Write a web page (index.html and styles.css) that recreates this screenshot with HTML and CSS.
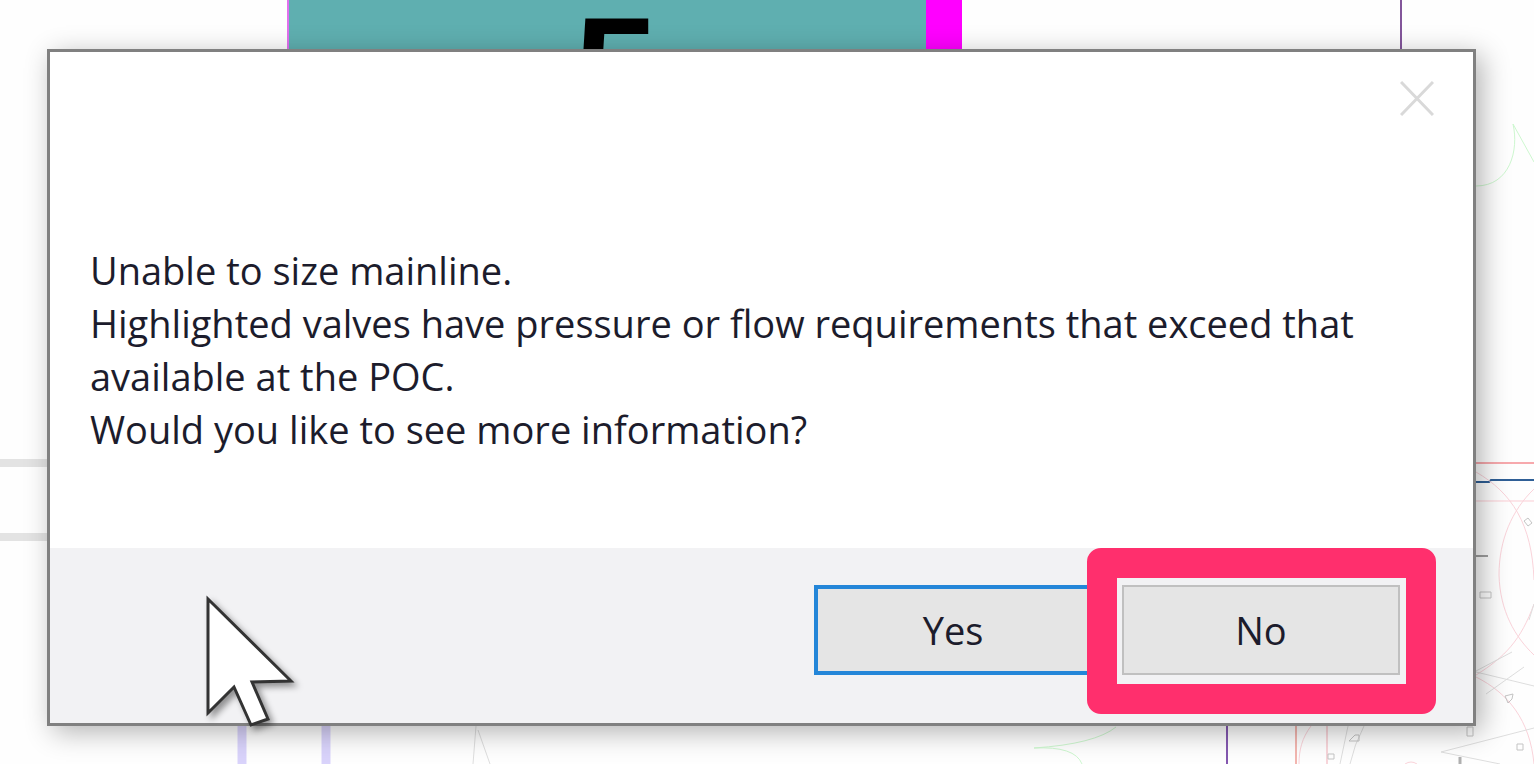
FILE: index.html
```html
<!DOCTYPE html>
<html lang="en">
<head>
    <meta charset="UTF-8">
    <meta name="viewport" content="width=device-width, initial-scale=1.0">
    <title>Size Mainline</title>
    <link rel="stylesheet" href="styles.css">
</head>
<body>
    <svg class="drawing" viewBox="0 0 1534 764" preserveAspectRatio="xMinYMin slice" aria-hidden="true">
        <!-- station label -->
        <rect x="288" y="0" width="640" height="200" fill="#5fafb0"/>
        <rect x="287" y="0" width="2" height="200" fill="#e070ee"/>
        <rect x="926" y="0" width="36" height="200" fill="#ff00ff"/>
        <text class="station" x="574" y="124">5</text>
        <path d="M1401 0V60" stroke="#83569b" stroke-width="2"/>

        <!-- walls and pipes -->
        <path d="M0 463H60M0 537H60" stroke="#e3e3e3" stroke-width="8"/>
        <path d="M242 700V764M326 700V764" stroke="#d9d3fb" stroke-width="9"/>
        <path d="M1227 700V764" stroke="#8458b0" stroke-width="2"/>
        <path d="M1296 700V764" stroke="#f3b6b0" stroke-width="2"/>
        <path d="M1327 700V764" stroke="#f8d5da" stroke-width="2"/>
        <path d="M1460 463H1534" stroke="#f7a9ad" stroke-width="2"/>
        <path d="M1460 501H1534" stroke="#fbcdd4" stroke-width="1"/>
        <path d="M1460 482H1489L1491 480H1534" stroke="#2f5f96" stroke-width="2" fill="none"/>
        <path d="M1470 556H1488" stroke="#a0a0a0" stroke-width="2"/>

        <!-- sprinkler arcs -->
        <g fill="none" stroke="#fad3da" stroke-width="1">
            <path d="M1476 472C1512 493 1532 524 1534 580"/>
            <path d="M1534 489C1512 510 1499 540 1499 575C1500 611 1515 637 1534 655"/>
            <path d="M1476 675C1505 657 1521 640 1534 604"/>
            <path d="M1476 677C1508 693 1530 720 1534 764"/>
            <path d="M1311 726C1302 738 1299 750 1299 764"/>
            <path d="M1405 764Q1411 760 1417 764"/>
        </g>
        <g fill="none" stroke="#cdf7cf" stroke-width="1">
            <path d="M1513 124C1519 150 1510 186 1476 186M1513 124L1534 162"/>
            <path d="M1116 727Q1095 744 1034 748Q1075 746 1082 764"/>
        </g>
        <g fill="none" stroke="#dedede" stroke-width="1">
            <path d="M476 726L473 764M478 730L490 764"/>
            <path d="M1534 728L1441 752L1500 764"/>
            <path d="M1476 672L1534 686M1476 671L1512 652M1486 694L1524 667"/>
            <path d="M1348 726L1340 764M1364 726Q1354 745 1350 764M1534 604L1529 620"/>
        </g>
        <g fill="none" stroke="#c4c4c4" stroke-width="1">
            <path d="M1480 592h11v6h-11zM1467 727h6v9h-6zM1517 744h6v6h-6zM1328 754h6v5h-6z"/>
            <path d="M1349 741l6-6h4v6zM1505 696l8-2-1 5-4 4zM1524 521l4-3 4 5-4 3z"/>
        </g>
        <path d="M1460 757V764" stroke="#b0b0b0" stroke-width="3"/>
    </svg>

    <div class="dialog" role="dialog" aria-labelledby="message">
        <div class="titlebar">
            <button class="close" type="button" aria-label="Close">
                <svg width="34" height="35" viewBox="0 0 34 35" aria-hidden="true">
                    <path d="M1 1L33 34M33 1L1 34" stroke="#d9d9d9" stroke-width="3"/>
                </svg>
            </button>
        </div>
        <div class="message" id="message">
            <p>Unable to size mainline.</p>
            <p>Highlighted valves have pressure or flow requirements that exceed that available at the POC.</p>
            <p>Would you like to see more information?</p>
        </div>
        <div class="actions">
            <button class="btn btn-default" type="button">Yes</button>
            <div class="highlight">
                <button class="btn" type="button">No</button>
            </div>
        </div>
    </div>

    <svg class="cursor" width="100" height="140" viewBox="0 0 100 140" aria-hidden="true">
        <path d="M8 9V123L34 97L51 135L68 129L52 92L91 91Z" fill="#fff" stroke="#333" stroke-width="3"/>
    </svg>
</body>
</html>
```
FILE: styles.css
```css
* {
    box-sizing: border-box;
}

body {
    margin: 0;
    min-height: 100vh;
    padding: 49px 58px 39px 47px;
    background-color: #fefefe;
    font-family: "Open Sans", "Noto Sans", sans-serif;
    color: #1c1c2c;
    overflow: hidden;
}

.drawing {
    position: absolute;
    top: 0;
    left: 0;
    width: 100%;
    height: 100vh;
}

.station {
    font-family: "Liberation Sans", Arial, sans-serif;
    font-size: 152px;
    font-weight: bold;
}

.dialog {
    position: relative;
    background-color: #fff;
    border: 3px solid #808080;
    box-shadow: 6px 6px 26px rgba(0, 0, 0, 0.3);
}

.titlebar {
    display: flex;
    justify-content: flex-end;
    padding: 29px 39px 0 0;
}

.close {
    display: flex;
    padding: 0;
    border: none;
    background: none;
}

.message {
    padding: 128px 80px 92px 40px;
    font-size: 38px;
    line-height: 53px;
}

.message p {
    margin: 0;
}

.actions {
    display: flex;
    justify-content: flex-end;
    gap: 30px;
    padding: 37px 73px 48px;
    background-color: #f2f2f4;
}

.btn {
    display: block;
    width: 278px;
    height: 90px;
    padding: 0;
    border: 2px solid #c0c0c0;
    background-color: #e5e5e5;
    color: inherit;
    font-family: inherit;
    font-size: 38px;
}

.btn-default {
    border: 4px solid #2486d8;
}

.highlight {
    position: relative;
}

.highlight::after {
    content: "";
    position: absolute;
    inset: -37px -36px -39px -35px;
    border: 30px solid #ff2f6d;
    border-radius: 14px;
    pointer-events: none;
}

.cursor {
    position: absolute;
    top: 590px;
    left: 200px;
    filter: drop-shadow(4px 4px 3px rgba(0, 0, 0, 0.4));
    pointer-events: none;
}
```
